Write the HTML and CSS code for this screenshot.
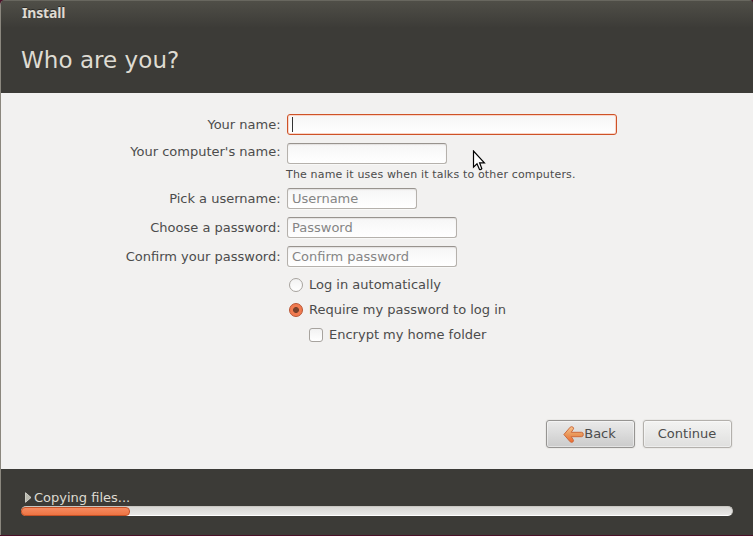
FILE: index.html
```html
<!DOCTYPE html>
<html lang="en">
<head>
<meta charset="utf-8">
<title>Install</title>
<link rel="stylesheet" href="styles.css">
</head>
<body>
<div class="window">
  <header class="header">
    <div class="titlebar"><span class="title">Install</span></div>
    <h1 class="heading"><span class="heading-text">Who are you?</span></h1>
  </header>
  <main class="content">
    <form class="form">
      <label class="label">Your name:</label>
      <div class="field field-name"><span class="caret"></span></div>
      <label class="label label-computer">Your computer's name:</label>
      <div class="field field-computer"></div>
      <p class="hint"><span class="hint-text">The name it uses when it talks to other computers.</span></p>
      <label class="label">Pick a username:</label>
      <div class="field field-username">Username</div>
      <label class="label">Choose a password:</label>
      <div class="field field-password">Password</div>
      <label class="label">Confirm your password:</label>
      <div class="field field-password">Confirm password</div>
      <div class="options">
        <div class="option"><span class="radio"></span><span>Log in automatically</span></div>
        <div class="option"><span class="radio radio-on"></span><span>Require my password to log in</span></div>
        <div class="option option-sub"><span class="check"></span><span>Encrypt my home folder</span></div>
      </div>
    </form>
    <div class="buttons">
      <div class="button button-back">
        <svg class="arrow" width="21" height="17" viewBox="0 0 21 17"><defs><linearGradient id="arrow-fill" x1="0" y1="0" x2="0" y2="1"><stop offset="0" stop-color="#f8c48e"/><stop offset=".5" stop-color="#e9985b"/><stop offset="1" stop-color="#ef6a30"/></linearGradient></defs><path d="M.9 8.5 7.2 1.2Q8.5.2 9.9 1.1T10.1 3.5L8.2 6.3H18.6Q20.3 6.4 20.3 8.5T18.6 10.7H8.2L10.1 13.5Q11 15 9.9 15.9T7.2 15.8Z" fill="url(#arrow-fill)" stroke="#cc6a3c"/></svg><span>Back</span>
      </div>
      <div class="button">Continue</div>
    </div>
  </main>
  <footer class="footer">
    <div class="status"><svg class="expander" width="7" height="11" viewBox="0 0 7 11"><path d="M.5.7 6 5.5.5 10.3Z" fill="#b9b8ad" stroke="#e0dfd8" stroke-width=".8"/></svg><span>Copying files...</span></div>
    <div class="progress"><div class="progress-fill"></div></div>
  </footer>
</div>
<svg class="pointer" width="14" height="22" viewBox="0 0 14 22"><path d="M1.5 1V17.2L5 13.8 7.5 19.5Q8.8 20 9.8 18.6L7.6 12.8H12.4Z" fill="#fff" stroke="#000" stroke-width="1.2"/></svg>
</body>
</html>
```

FILE: styles.css
```css
* { box-sizing: border-box; }
body {
  margin: 0;
  background: #4b1128;
  color: #4c4c4c;
  font: 13px/20px "DejaVu Sans", sans-serif;
  white-space: nowrap;
  overflow: hidden;
}
.window {
  width: 753px;
  height: 535px;
  display: flex;
  flex-direction: column;
  border-left: 1px solid #8b877e;
  border-radius: 5px 4px 0 0;
  background: #3c3b37;
  overflow: hidden;
}
.header {
  height: 93px;
  margin-left: -1px;
  padding-left: 21px;
  background: linear-gradient(#504f48, #3c3b37 28px);
  box-shadow: inset 0 1px #68675f;
}
.titlebar { height: 28px; padding-left: 1px; line-height: 26px; }
.title {
  color: #dfdbd2;
  font: bold 14px/26px "Noto Sans", sans-serif;
  letter-spacing: -.15px;
  text-shadow: 0 -1px #2c2b28;
}
.heading { margin: 0; font-size: 23px; font-weight: 400; line-height: 64px; letter-spacing: .05px; color: #dfdbd2; }
.content {
  height: 376px;
  padding: 21px 20px 20px 0;
  background: #f2f1f0;
  display: flex;
  flex-direction: column;
  justify-content: space-between;
}
.form {
  display: grid;
  grid-template-columns: 279px 1fr;
  column-gap: 7px;
  grid-template-rows: 21px 21px 8px 21px 21px 21px 75px;
  row-gap: 8px;
  margin: 0;
}
.label { text-align: right; line-height: 21px; margin-right: -.6px; }
.label-computer { margin-top: -2px; }
.field {
  height: 21px;
  padding-left: 4px;
  border: 1px solid #b5b1ac;
  border-top-color: #98938e;
  border-radius: 3px;
  background: linear-gradient(#f6f6f6, #fff);
  box-shadow: inset 0 1px 1px #e4e2e0, 0 1px #f8f8f7;
  line-height: 19px;
  color: #858585;
}
.field-name { width: 330px; border-color: #ce5227; box-shadow: inset 0 0 0 1px #f9d5c8; }
.caret { display: block; width: 1px; height: 15px; margin: 2px 0 0; background: #333; }
.field-computer { width: 160px; }
.field-username { width: 130px; }
.field-password { width: 170px; }
.hint { grid-column: 2; margin: -7px 0 0 -1px; font-size: 11px; letter-spacing: .16px; line-height: 20px; height: 20px; }
.options { grid-column: 2; margin-top: -3px; padding-left: 2px; }
.option { display: flex; align-items: center; height: 25px; gap: 6px; }
.option-sub { padding-left: 20px; }
.radio, .check {
  width: 14px;
  height: 14px;
  border: 1px solid #a7a39e;
  background: linear-gradient(#f2f2f2, #fff);
}
.radio { border-radius: 50%; }
.check { border-radius: 3px; }
.radio-on {
  border-color: #b95330;
  background: radial-gradient(circle, #78412b 2.6px, #f17b50 3.3px);
}
.buttons { display: flex; justify-content: flex-end; gap: 8px; margin: 0 1px 1px 0; }
.button {
  display: flex;
  align-items: center;
  justify-content: center;
  width: 89px;
  height: 28px;
  padding-right: 1px;
  border: 1px solid #b3b0ac;
  border-radius: 3px;
  background: linear-gradient(#f3f3f2, #dfdfde);
  box-shadow: inset 0 0 0 1px rgba(255,255,255,.45), 0 0 0 1px #eae9e7;
}
.button-back { padding-right: 2px; border-color: #969492; background: linear-gradient(#eaeaea, #cbcbcb); }
.arrow { flex: none; margin-top: 1px; }
.footer { height: 66px; padding: 19px 20px 0; }
.status { display: flex; align-items: center; height: 19px; padding-left: 4px; gap: 2px; color: #dfdbd2; }
.progress {
  width: 712px;
  height: 10px;
  margin-top: -1px;
  border: 1px solid #c9c7c2;
  border-bottom-color: #fff;
  border-radius: 5px;
  background: linear-gradient(#d8d7d4, #e9e8e6);
}
.progress-fill {
  width: 109px;
  height: 9px;
  margin: 0 0 0 -1px;
  border: 1px solid #c65227;
  border-radius: 4px;
  background: linear-gradient(#f58b61, #ee7442);
}
.pointer { position: absolute; left: 472px; top: 150px; }
```
